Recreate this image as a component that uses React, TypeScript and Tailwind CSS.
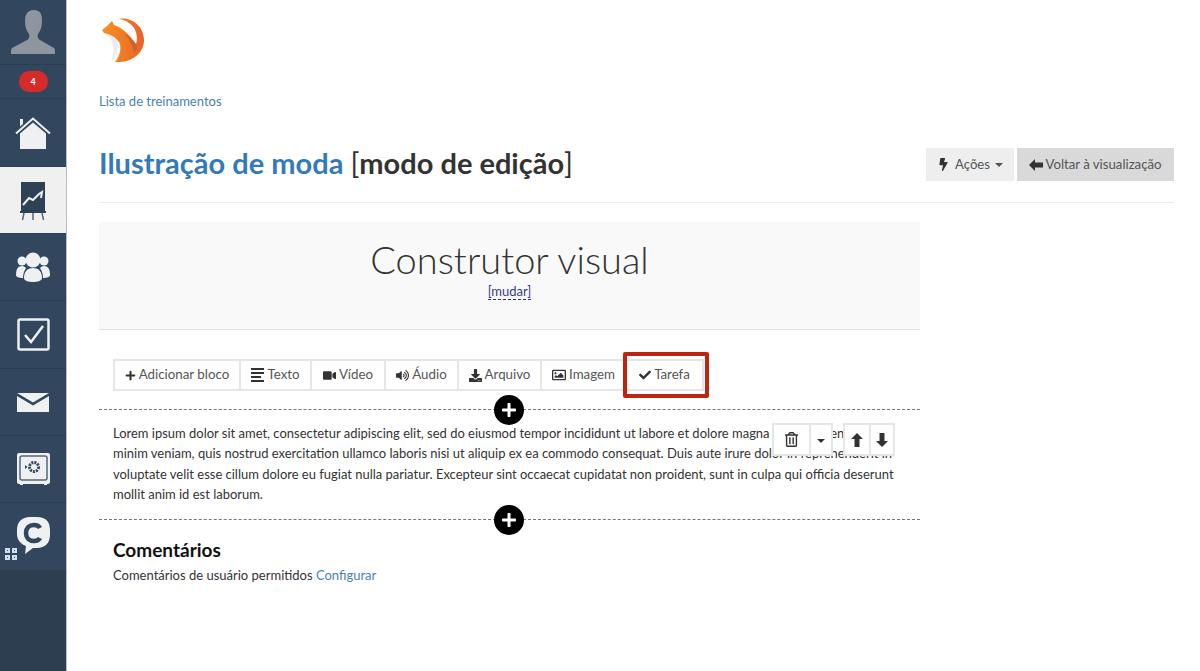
import { ReactNode } from "react";
import {
	FaBolt,
	FaCheck,
	FaDownload,
	FaPlus,
	FaRegImage,
	FaRegTrashAlt,
	FaVideo,
	FaVolumeUp,
} from "react-icons/fa";

const style = {
	row: "flex items-center justify-center border-b border-b-[#2b3f54] bg-[#32475e]",
	tool: "flex h-[28px] items-center gap-[3px] border-r-2 border-r-[#e6e6e6] bg-white text-[13.3px] text-[#555]",
	small: "flex h-[33px] items-center justify-center border-2 border-[#e6e6e6] bg-white text-[#333]",
} as const;

const ICON = "#eef0f1";

function Avatar() {
	return (
		<svg width="46" height="44" viewBox="0 0 46 44" fill="#8d959e">
			<path d="M23 0c-7 0-9 5-9 11 0 5 1 9 4 13 1 2 0 5-2 6L1 38c-1 1-1 3-1 6h44c0-3 0-5-1-6l-14-8c-2-1-3-4-2-6 3-4 4-8 4-13 0-6-1-11-8-11z" transform="translate(1 0)" />
		</svg>
	);
}

function House() {
	return (
		<svg width="36" height="32" viewBox="0 0 36 32" fill={ICON}>
			<path d="M1 16.500 18 1.500l17 15" fill="none" stroke={ICON} strokeWidth="2" />
			<path d="M5 2h3v5L5 9.500z" />
			<path d="M18 5.500 5 16.500V32h26V16.500z" />
		</svg>
	);
}

function Board() {
	return (
		<svg width="26" height="38" viewBox="0 0 26 38">
			<rect x="1" y="0" width="24" height="29" fill="#2d4257" />
			<path d="M3 23l6-7 4 2 6-6 3-2-1 6" fill="none" stroke="#eef0f1" strokeWidth="2" />
			<rect x="0" y="29" width="26" height="2" fill="#2d4257" />
			<path d="M4 31 2.500 38M13 31v7M22 31l1.500 7" stroke="#56677a" strokeWidth="1.500" />
		</svg>
	);
}

function People() {
	return (
		<svg width="34" height="30" viewBox="0 0 34 30" fill={ICON}>
			<circle cx="6" cy="9" r="4.500" />
			<circle cx="28" cy="9" r="4.500" />
			<path d="M0 23c0-6 2-9 6-9 2 0 3 1 4 2-2 3-3 6-3 10-4 0-7-1-7-3zM34 23c0-6-2-9-6-9-2 0-3 1-4 2 2 3 3 6 3 10 4 0 7-1 7-3z" />
			<circle cx="17" cy="8" r="7.500" />
			<path d="M17 16c-6 0-9 4-9 10 0 3 5 4 9 4s9-1 9-4c0-6-3-10-9-10z" />
		</svg>
	);
}

function CheckBox() {
	return (
		<svg width="33" height="33" viewBox="0 0 33 33" fill="none">
			<rect x="1.500" y="1.500" width="30" height="30" rx="1.500" stroke={ICON} strokeWidth="2.500" />
			<path d="M8 17l6 7L26 8" stroke={ICON} strokeWidth="2.500" />
		</svg>
	);
}

function Mail() {
	return (
		<svg width="32" height="19" viewBox="0 0 32 19" fill={ICON}>
			<path d="M0 0l16 9.500L32 0z" />
			<path d="M0 3v16h32V3L16 12.500z" />
		</svg>
	);
}

function Safe() {
	return (
		<svg width="33" height="32" viewBox="0 0 33 32">
			<rect x="0" y="0" width="33" height="31" rx="2" fill={ICON} />
			<rect x="3" y="3" width="27" height="24" rx="2" fill="none" stroke="#56677a" strokeWidth="1.500" />
			<circle cx="17" cy="14" r="4.500" fill="none" stroke="#32475e" strokeWidth="3" strokeDasharray="2 1" />
			<path d="M8 12v4l2.500-2z" fill="#32475e" />
			<path d="M3 31h3v1H3zM27 31h3v1h-3z" fill={ICON} />
		</svg>
	);
}

function ChatC() {
	return (
		<div className="relative h-[37px] w-[33px]">
			<svg width="33" height="37" viewBox="0 0 33 37">
				<path d="M13 0h7c9 0 13 5 13 13v5c0 8-5 13-13 13h-4l-8 6 1-8C4 27 0 23 0 17v-4C0 5 5 0 13 0z" fill={ICON} />
				<path d="M23 11c-1-2-3-3-6-3-5 0-8 3-8 8s3 8 8 8c3 0 5-1 6-3" fill="none" stroke="#32475e" strokeWidth="4.500" />
			</svg>
			<svg className="absolute left-[-12px] top-[31px]" width="12" height="12" viewBox="0 0 12 12" fill="#cfe0ee">
				<path d="M0 0h5v5H0zM7 0h5v5H7zM0 7h5v5H0zM7 7h5v5H7z" />
				<path d="M2 2h1v1H2zM9 2h1v1H9zM2 9h1v1H2zM9 9h1v1H9z" fill="#32475e" />
			</svg>
		</div>
	);
}

function Fox() {
	return (
		<svg width="44" height="46" viewBox="0 0 44 46">
			<defs>
				<linearGradient id="fox" x1="0" y1="0" x2="1" y2="0">
					<stop offset="0" stopColor="#f7931e" />
					<stop offset="1" stopColor="#e8632a" />
				</linearGradient>
			</defs>
			<path d="M3 16c5 1 8 6 9 12 1 6 0 11-2 15 4-3 7-8 7-15 0-6-3-11-8-13z" fill="#ececec" />
			<path d="M1 12 6 8l5-5 2 4c7 2 15 9 22 19 2-6 1-16-7-21C24 2 20 1 17 1c13-3 26 7 26 21 0 14-13 23-29 22 5-6 7-14 4-20-4-6-10-8-15-9z" fill="url(#fox)" />
			<path d="M23 15c5 3 9 7 12 11l1 5-3 4c-1-8-5-14-10-20z" fill="#a9502a" opacity="0.450" />
		</svg>
	);
}

function Arrow({ rotate }: { rotate: string }) {
	return (
		<svg width="14" height="12" viewBox="0 0 14 12" fill="currentColor" className={rotate}>
			<path d="M0 6 6 0v3.500h8v5H6V12z" />
		</svg>
	);
}

function Tool({ icon, label, className }: { icon: ReactNode; label: string; className: string }) {
	return (
		<div className={`${style.tool} ${className}`}>
			{icon}
			<span>{label}</span>
		</div>
	);
}

function AddButton() {
	return (
		<div className="absolute left-[395px] top-[-15px] flex h-[30px] w-[30px] items-center justify-center rounded-full bg-black text-white">
			<FaPlus size={16} />
		</div>
	);
}

export default function App() {
	return (
		<div className="flex min-h-[671px] bg-white font-['Lato','Liberation_Sans',sans-serif] text-[14px] text-[#333]">
			<aside className="flex w-[67px] shrink-0 flex-col border-r border-r-[#b8bdc2] bg-[#2c3e50]">
				<div className={`${style.row} h-[65px]`}>
					<Avatar />
				</div>
				<div className={`${style.row} h-[34px]`}>
					<span className="flex h-[21px] w-[29px] items-center justify-center rounded-[10px] bg-[#d52b2b] text-[9px] font-bold text-white">4</span>
				</div>
				<div className={`${style.row} h-[68px]`}>
					<House />
				</div>
				<div className="flex h-[67px] items-center justify-center border-b border-b-[#2b3f54] bg-[#f0f0f0] pt-px">
					<Board />
				</div>
				<div className={`${style.row} h-[67px] pb-px`}>
					<People />
				</div>
				<div className={`${style.row} h-[68px]`}>
					<CheckBox />
				</div>
				<div className={`${style.row} h-[67px]`}>
					<Mail />
				</div>
				<div className={`${style.row} h-[67px]`}>
					<Safe />
				</div>
				<div className="flex h-[67px] items-center justify-center bg-[#32475e] pb-[3px]">
					<ChatC />
				</div>
			</aside>

			<main className="flex-1 pl-[32px] pr-[26px]">
				<div className="pl-[2px] pt-[18px]">
					<Fox />
				</div>
				<a className="mt-[27px] block h-[20px] text-[13px] leading-[20px] text-[#4a7fb5]">Lista de treinamentos</a>

				<div className="mt-[33px] flex h-[59px] items-start justify-between border-b border-b-[#eeeeee]">
					<h1 className="text-[29px] font-bold leading-[38px]">
						<span className="text-[#337ab7]">Ilustração de moda</span> <span className="font-normal">[</span>modo de edição<span className="font-normal">]</span>
					</h1>
					<div className="mt-[4px] flex gap-[3px] text-[13.2px] text-[#555]">
						<div className="flex h-[33px] w-[88px] items-center justify-center gap-[5px] bg-[#eeeeee]">
							<FaBolt size={13} className="text-[#333]" />
							<span>Ações</span>
							<span className="h-0 w-0 border-x-[4px] border-t-[4px] border-x-transparent border-t-[#555]" />
						</div>
						<div className="flex h-[33px] w-[157px] items-center justify-center gap-[2px] bg-[#d9d9d9]">
							<span className="text-[#333]"><Arrow rotate="" /></span>
							<span>Voltar à visualização</span>
						</div>
					</div>
				</div>

				<div className="w-[821px]">
					<div className="mt-[19px] flex h-[108px] flex-col items-center border-b border-b-[#e3e3e3] bg-[#f9f9f9] pt-[14px]">
						<div className="text-[38px] font-light leading-[47px]">Construtor visual</div>
						<a className="border-b border-dashed border-b-[#2a2a9a] text-[13px] leading-[16px] text-[#3a3a8c]">[mudar]</a>
					</div>

					<div className="relative ml-[14px] mt-[29px] flex h-[32px] w-fit border-y-2 border-l-2 border-[#e6e6e6]">
						<Tool icon={<FaPlus size={11} className="text-[#333]" />} label="Adicionar bloco" className="w-[126px] justify-center" />
						<Tool icon={<span className="flex w-[13px] flex-col gap-[2px]"><i className="h-[2px] w-full bg-[#333]" /><i className="h-[2px] w-full bg-[#333]" /><i className="h-[2px] w-[10px] bg-[#333]" /><i className="h-[2px] w-full bg-[#333]" /></span>} label="Texto" className="w-[71px] justify-center" />
						<Tool icon={<FaVideo size={13} className="text-[#333]" />} label="Vídeo" className="w-[74px] justify-center" />
						<Tool icon={<FaVolumeUp size={13} className="text-[#333]" />} label="Áudio" className="w-[73px] justify-center" />
						<Tool icon={<FaDownload size={13} className="text-[#333]" />} label="Arquivo" className="w-[83px] justify-center" />
						<Tool icon={<FaRegImage size={14} className="text-[#333]" />} label="Imagem" className="w-[85px] justify-center" />
						<Tool icon={<FaCheck size={12} className="text-[#333]" />} label="Tarefa" className="w-[77px] justify-center" />
						<div className="absolute left-[508px] top-[-9px] h-[46px] w-[86px] rounded-[2px] border-[4px] border-[#bf2410]" />
					</div>

					<div className="relative mt-[18px] border-t border-dashed border-t-[#777] px-[14px] pb-[14.4px] pt-[13px]">
						<AddButton />
						<p className="text-[12.97px] leading-[20.4px] text-[#333]">
							Lorem ipsum dolor sit amet, consectetur adipiscing elit, sed do eiusmod tempor incididunt ut labore et dolore magna aliqua. Ut enim ad minim veniam, quis nostrud exercitation ullamco laboris nisi ut aliquip ex ea commodo consequat. Duis aute irure dolor in reprehenderit in voluptate velit esse cillum dolore eu fugiat nulla pariatur. Excepteur sint occaecat cupidatat non proident, sunt in culpa qui officia deserunt mollit anim id est laborum.
						</p>
						<div className="absolute left-[673px] top-[13px] flex gap-[10px]">
							<div className="flex">
								<div className={`${style.small} w-[39px]`}><FaRegTrashAlt size={15} /></div>
								<div className={`${style.small} ml-[-2px] w-[24px]`}>
									<span className="mt-[3px] h-0 w-0 border-x-[4px] border-t-[4px] border-x-transparent border-t-[#333]" />
								</div>
							</div>
							<div className="flex">
								<div className={`${style.small} w-[28px]`}><Arrow rotate="rotate-90" /></div>
								<div className={`${style.small} ml-[-2px] w-[26px]`}><Arrow rotate="-rotate-90" /></div>
							</div>
						</div>
					</div>

					<div className="relative border-t border-dashed border-t-[#777] px-[14px] pt-[19px]">
						<AddButton />
						<h2 className="text-[19px] font-bold leading-[22px] text-[#111]">Comentários</h2>
						<p className="mt-[4px] text-[13px] leading-[20px]">
							Comentários de usuário permitidos <a className="text-[#4a7fb5]">Configurar</a>
						</p>
					</div>
				</div>
			</main>
		</div>
	);
}
